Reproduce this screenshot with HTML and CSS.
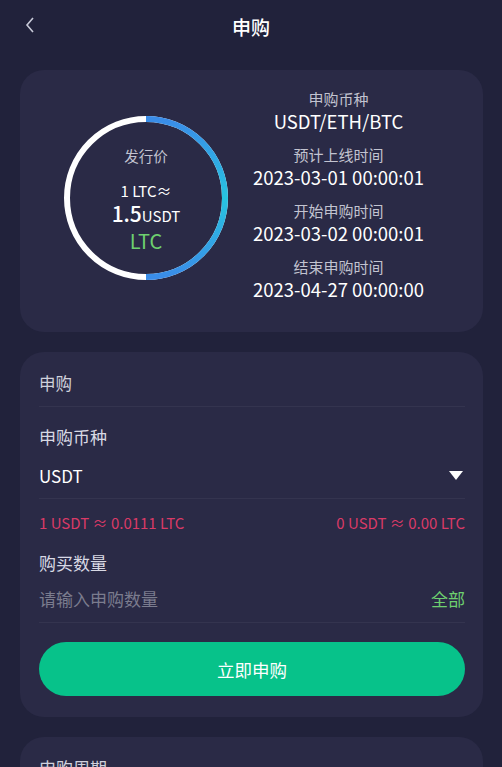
FILE: index.html
```html
<!DOCTYPE html>
<html lang="zh-CN">
<head>
  <meta charset="UTF-8">
  <meta name="viewport" content="width=device-width, initial-scale=1.0">
  <title>申购</title>
  <link rel="stylesheet" href="styles.css">
</head>
<body>
  <header class="topbar">
    <span class="back">
      <svg width="12" height="18" viewBox="0 0 12 18"><path d="M9 2 L3 9 L9 16" fill="none" stroke="#c8cad8" stroke-width="1.6"/></svg>
    </span>
    <h1>申购</h1>
  </header>

  <section class="card summary">
    <div class="ring">
      <svg width="164" height="164" viewBox="0 0 164 164">
        <defs>
          <linearGradient id="arc" x1="0" y1="0" x2="0" y2="1">
            <stop offset="0" stop-color="#3a8ce8"/>
            <stop offset="0.5" stop-color="#27c4e0"/>
            <stop offset="1" stop-color="#3a8ce8"/>
          </linearGradient>
        </defs>
        <circle cx="82" cy="82" r="79" fill="none" stroke="#ffffff" stroke-width="6"/>
        <path d="M82 3 A79 79 0 0 1 82 161" fill="none" stroke="url(#arc)" stroke-width="6"/>
      </svg>
      <div class="ring-text">
        <div class="ring-label">发行价</div>
        <div class="ring-rate">1 LTC≈</div>
        <div class="ring-price"><b>1.5</b>USDT</div>
        <div class="ring-coin">LTC</div>
      </div>
    </div>
    <dl class="info">
      <dt>申购币种</dt>
      <dd>USDT/ETH/BTC</dd>
      <dt>预计上线时间</dt>
      <dd>2023-03-01 00:00:01</dd>
      <dt>开始申购时间</dt>
      <dd>2023-03-02 00:00:01</dd>
      <dt>结束申购时间</dt>
      <dd>2023-04-27 00:00:00</dd>
    </dl>
  </section>

  <section class="card form">
    <div class="form-title">申购</div>
    <div class="field">
      <div class="field-label">申购币种</div>
      <div class="field-row select-row">
        <span class="value">USDT</span>
        <span class="caret"></span>
      </div>
    </div>
    <div class="rates">
      <span>1 USDT ≈ 0.0111 LTC</span>
      <span>0 USDT ≈ 0.00 LTC</span>
    </div>
    <div class="field">
      <div class="field-label">购买数量</div>
      <div class="field-row">
        <input type="text" placeholder="请输入申购数量">
        <span class="all">全部</span>
      </div>
    </div>
    <button class="submit">立即申购</button>
  </section>

  <section class="card period">
    <div class="form-title">申购周期</div>
  </section>
</body>
</html>
```

FILE: styles.css
```css
body {
  margin: 0;
  background: #21223b;
  color: #fff;
  font-family: "Noto Sans CJK SC", "Noto Sans", sans-serif;
  overflow: hidden;
}
.topbar {
  height: 52px;
  display: flex;
  align-items: center;
  justify-content: center;
  position: relative;
}
.topbar h1 {
  margin: 0;
  font-size: 19px;
  font-weight: 500;
}
.back {
  position: absolute;
  left: 24px;
  top: 15px;
}
.card {
  background: #2a2a46;
  margin: 0 19px 20px 20px;
  border-radius: 24px;
}
.summary {
  margin-top: 18px;
  height: 262px;
  display: flex;
  align-items: flex-start;
  padding-left: 44px;
  box-sizing: border-box;
}
.ring {
  position: relative;
  width: 164px;
  height: 164px;
  flex: none;
  margin-top: 46px;
}
.ring svg {
  display: block;
}
.ring-text {
  position: absolute;
  inset: 0;
  display: flex;
  flex-direction: column;
  align-items: center;
  justify-content: center;
  padding-top: 2px;
}
.ring-label {
  font-size: 14.5px;
  color: #c2c3d0;
  margin-bottom: 15px;
}
.ring-rate {
  font-size: 15px;
  line-height: 20px;
}
.ring-price {
  font-size: 15px;
  line-height: 25px;
}
.ring-price b {
  font-size: 21px;
  font-weight: 500;
}
.ring-coin {
  font-size: 20px;
  line-height: 25px;
  color: #6ed06f;
}
.info {
  margin: 19px 34px 0 0;
  flex: 1;
  text-align: center;
}
.info dt {
  font-size: 15px;
  color: #c2c3d0;
  line-height: 20px;
}
.info dd {
  margin: 0 0 12px;
  font-size: 18.5px;
  line-height: 24px;
}
.info dd:last-child {
  margin-bottom: 0;
}
.form {
  padding: 8px 18px 21px 19px;
}
.form-title {
  font-size: 16.5px;
  color: #d0d1dc;
  line-height: 46px;
  border-bottom: 1px solid #34344f;
}
.field-label {
  font-size: 17px;
  color: #d8d9e4;
  margin-top: 19px;
  line-height: 22px;
}
.field-row {
  display: flex;
  align-items: center;
  justify-content: space-between;
  height: 48px;
  border-bottom: 1px solid #34344f;
  font-size: 17px;
}
.select-row {
  height: 46px;
  padding-top: 4px;
}
.caret {
  width: 0;
  height: 0;
  border-left: 7px solid transparent;
  border-right: 7px solid transparent;
  border-top: 9px solid #fff;
  margin-right: 2px;
}
.rates {
  display: flex;
  justify-content: space-between;
  font-size: 15px;
  color: #d93a66;
  margin-top: 13px;
}
.field-row input {
  flex: 1;
  background: none;
  border: none;
  outline: none;
  padding: 0;
  font: inherit;
  color: #fff;
}
.field-row input::placeholder {
  color: #7b7c8e;
}
.all {
  color: #6ed06f;
}
.submit {
  display: block;
  width: 100%;
  height: 54px;
  margin-top: 19px;
  border: none;
  border-radius: 27px;
  background: #07c28a;
  color: #fff;
  font: inherit;
  font-size: 17.5px;
}
.period {
  padding: 0 19px;
  height: 60px;
}
.period .form-title {
  border: none;
  line-height: 62px;
  font-size: 17px;
}
```
